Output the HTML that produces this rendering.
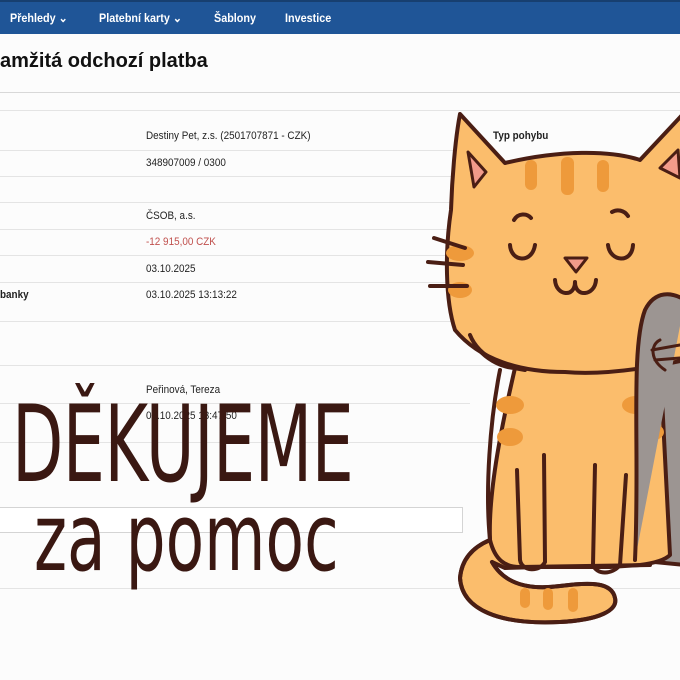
<!DOCTYPE html>
<html><head><meta charset="utf-8"><style>
*{margin:0;padding:0;box-sizing:border-box}
body{width:680px;height:680px;overflow:hidden;background:#fcfcfc;font-family:"Liberation Sans",sans-serif;position:relative}
.nav{position:absolute;left:0;top:0;width:680px;height:34px;background:#1f5597;border-top:2px solid #173f70}
.nav span{position:absolute;top:9px;color:#fff;font-weight:bold;font-size:12px;transform:scaleX(.9);transform-origin:left}
h1{position:absolute;left:0;top:50px;font-size:20px;font-weight:bold;color:#111}
.hl{position:absolute;left:0;height:1px;background:#e4e4e4}
.t{position:absolute;font-size:11px;color:#222;transform:scaleX(.9);transform-origin:left}
.big{position:absolute;color:#3a1812;font-family:"DejaVu Sans",sans-serif;transform-origin:left top}
</style></head><body>
<div class="nav"><span style="left:10px">Přehledy ⌄</span><span style="left:99px">Platební karty ⌄</span><span style="left:214px">Šablony</span><span style="left:285px">Investice</span></div>
<h1>amžitá odchozí platba</h1>
<div class="hl" style="top:92px;width:680px;background:#d8d8d8"></div>
<div class="hl" style="top:110px;width:680px"></div>
<div class="hl" style="top:150px;width:470px"></div>
<div class="hl" style="top:176px;width:470px"></div>
<div class="hl" style="top:202px;width:470px"></div>
<div class="hl" style="top:229px;width:470px"></div>
<div class="hl" style="top:255px;width:470px"></div>
<div class="hl" style="top:282px;width:470px"></div>
<div class="hl" style="top:321px;width:680px"></div>
<div class="hl" style="top:365px;width:680px"></div>
<div class="hl" style="top:403px;width:470px"></div>
<div class="hl" style="top:442px;width:680px"></div>
<div class="hl" style="top:588px;width:680px"></div>
<div style="position:absolute;left:-2px;top:507px;width:465px;height:26px;border:1px solid #d4d4d4;background:#fff"></div>
<div class="t" style="left:146px;top:130px">Destiny Pet, z.s. (2501707871 - CZK)</div>
<div class="t" style="left:146px;top:157px">348907009 / 0300</div>
<div class="t" style="left:146px;top:210px">ČSOB, a.s.</div>
<div class="t" style="left:146px;top:236px;color:#c0504d">-12 915,00 CZK</div>
<div class="t" style="left:146px;top:263px">03.10.2025</div>
<div class="t" style="left:146px;top:289px">03.10.2025 13:13:22</div>
<div class="t" style="left:0;top:289px;font-weight:bold">banky</div>
<div class="t" style="left:493px;top:130px;font-weight:bold">Typ pohybu</div>
<div class="t" style="left:146px;top:384px">Peřinová, Tereza</div>
<div class="t" style="left:146px;top:410px">03.10.2025 13:47:50</div>
<div class="big" style="left:12px;top:390px;font-size:106px;line-height:110px;transform:scaleX(.63);letter-spacing:-1px">DĚKUJEME</div>
<div class="big" style="left:34px;top:484px;font-size:94px;line-height:110px;transform:scaleX(.67)">za pomoc</div>
<svg style="position:absolute;left:0;top:0" width="680" height="680" stroke="#4a1e14" stroke-width="4" stroke-linecap="round" stroke-linejoin="round">
<path d="M634,560 C640,450 630,350 645,310 C655,290 672,292 685,300 L685,565 Z" fill="#9c9592"/>
<path d="M470,335 C480,360 505,368 515,368 C503,420 488,490 490,540 C478,545 462,555 460,578 C462,610 500,625 560,622 C600,620 618,610 615,598 C612,582 590,582 560,586 C530,590 505,585 492,562 L505,568 L540,567 L610,567 L640,565 C655,563 665,560 670,555 L660,360 Z" fill="#fbbd6c"/>
<path d="M490,540 C478,545 462,555 460,578 C462,610 500,625 560,622 C600,620 618,610 615,598 C612,582 590,582 560,586 C530,590 505,585 492,562" fill="none"/>
<path d="M500,370 C490,420 485,490 490,540 C495,560 505,567 520,567 L650,565" fill="none"/>
<path d="M455,330 C445,300 445,250 451,210 C452,180 455,140 460,114 L505,163 C560,150 610,150 640,160 L685,112 L685,360 C640,370 600,375 565,372 C520,372 480,360 455,330 Z" fill="#fbbd6c"/>
<g fill="#ee9a3b" stroke="none">
<rect x="525" y="160" width="12" height="30" rx="6"/><rect x="561" y="157" width="13" height="38" rx="6"/><rect x="597" y="160" width="12" height="32" rx="6"/>
<ellipse cx="460" cy="253" rx="14" ry="8"/><ellipse cx="460" cy="290" rx="12" ry="8"/>
<ellipse cx="510" cy="405" rx="14" ry="9"/><ellipse cx="510" cy="437" rx="13" ry="9"/>
<ellipse cx="636" cy="405" rx="14" ry="9"/><ellipse cx="650" cy="432" rx="14" ry="9"/>
<rect x="520" y="588" width="10" height="20" rx="5"/><rect x="543" y="588" width="10" height="22" rx="5"/><rect x="568" y="588" width="10" height="24" rx="5"/>
</g>
<path d="M635,560 C640,450 630,350 645,310 C655,290 672,292 685,300" fill="#9c9592"/>
<path d="M468,152 L486,172 L474,187 Z M678,150 L660,168 L680,178 Z" fill="#f29b8a" stroke-width="3"/>
<path d="M470,335 C480,360 510,368 525,370" fill="none"/>
<path d="M514,220 C518,213 527,213 531,218 M612,212 C617,209 624,210 628,216 M510,245 C511,262 532,264 535,245 M608,245 C610,262 632,264 633,245 M555,280 C556,296 575,298 575,282 C575,298 595,296 596,280 M434,238 L465,248 M428,262 L463,265 M430,286 L467,286" fill="none"/>
<path d="M565,258 L587,258 L576,272 Z" fill="#f29b8a" stroke-width="3"/>
<path d="M517,470 L520,560 C522,572 540,572 545,562 L544,455 M595,465 L593,565 C597,575 612,575 620,565 L626,475" fill="none"/>
<path d="M660,340 C650,345 650,360 665,370 M652,350 L680,345 M655,360 L680,358" fill="none" stroke-width="3"/>
</svg>
</body></html>
